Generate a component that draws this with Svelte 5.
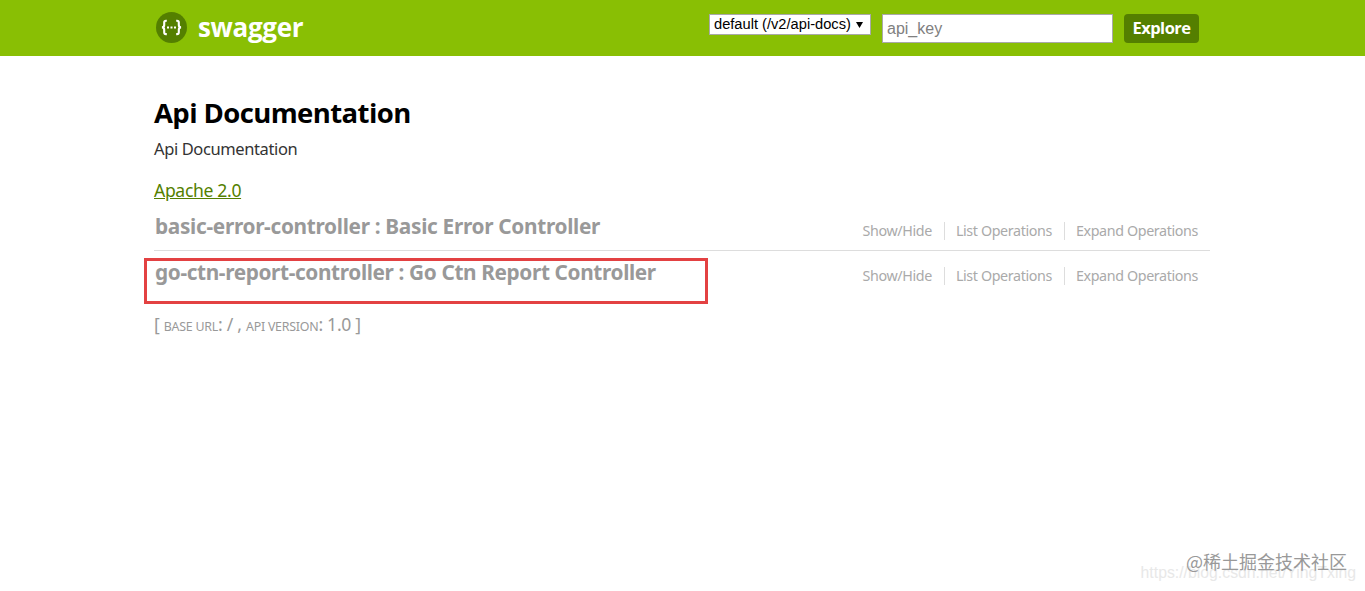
<script>
  const controllers = [
    { name: 'basic-error-controller', title: 'Basic Error Controller' },
    { name: 'go-ctn-report-controller', title: 'Go Ctn Report Controller', marked: true }
  ];
</script>

<header>
  <div class="wrap bar">
    <a class="brand" href="#/">
      <svg width="31" height="31" viewBox="0 0 31 31" fill="none" stroke="#fff">
        <circle cx="15.5" cy="15.5" r="15.5" fill="#547f00" stroke="none" />
        <path stroke-width="2.1" d="M10.8 8.7H10Q8.2 8.7 8.2 10.5V13Q8.2 15.4 5.9 15.4Q8.2 15.4 8.2 17.8V20.2Q8.2 22.1 10 22.1H10.8M20.2 8.7H21Q22.8 8.7 22.8 10.5V13Q22.8 15.4 25.1 15.4Q22.8 15.4 22.8 17.8V20.2Q22.8 22.1 21 22.1H20.2" />
        <path stroke-width="2" stroke-dasharray="2 1.5" d="M11 15.4H20" />
      </svg>
      <span>swagger</span>
    </a>
    <form>
      <div class="select"><span>default (/v2/api-docs)</span><svg width="7" height="6" viewBox="0 0 7 6"><path d="M0 0H7L3.5 6Z" /></svg></div>
      <input placeholder="api_key" aria-label="api_key" />
      <button type="button">Explore</button>
    </form>
  </div>
</header>

<main class="wrap">
  <h1>Api Documentation</h1>
  <p class="desc">Api Documentation</p>
  <p class="license"><a href="#/">Apache 2.0</a></p>
  <ul class="resources">
    {#each controllers as c}
      <li>
        <h2>{c.name} : {c.title}</h2>
        <div class="options">
          <a class="o1" href="#/">Show/Hide</a>
          <a class="o2" href="#/">List Operations</a>
          <a class="o3" href="#/">Expand Operations</a>
        </div>
        {#if c.marked}<div class="mark"></div>{/if}
      </li>
    {/each}
  </ul>
  <p class="footer">[ <small>base url</small>: / , <small>api version</small>: 1.0 ]</p>
</main>
<div class="wm-url">https://blog.csdn.net/YingTxing</div>
<div class="wm">@稀土掘金技术社区</div>

<style>
  :global(body) { background: #fff; overflow: hidden; }
  * { box-sizing: border-box; }
  .wrap { width: 1056px; margin-left: 154px; font-family: "Noto Sans", "Open Sans", sans-serif; }
  h1, h2, p, ul { margin: 0; padding: 0; }
  header { height: 56px; background: #89bf04; }
  .bar { display: flex; justify-content: space-between; }
  .brand { display: flex; padding: 12px 0 0 2px; text-decoration: none; color: #fff; }
  .brand span { font: bold 26px/30px "Open Sans", sans-serif; letter-spacing: -0.3px; margin-left: 11px; white-space: nowrap; }
  form { display: flex; padding-top: 14px; padding-right: 11px; }
  .select { display: flex; flex: none; align-items: center; width: 162px; height: 21px; border: 1px solid #a9a9a9; background: #fff; padding-left: 4px; font: 14.67px/19px "Liberation Sans", sans-serif; color: #000; white-space: nowrap; }
  .select svg { margin-left: 5px; }
  input { width: 231px; height: 29px; margin: 0 11px; border: 1px solid #a9a9a9; padding: 0 4px; font: 16px "Liberation Sans", sans-serif; border-radius: 0; outline: none; }
  input::placeholder { color: #808080; }
  button { width: 75px; height: 29px; padding: 0 0 1px; border: 0; border-radius: 4px; background: #547f00; color: #fff; font: bold 16.5px/28px "Open Sans", sans-serif; letter-spacing: -0.5px; }
  main { padding-top: 38px; }
  h1 { font-family: "Open Sans", sans-serif; font-size: 27.5px; line-height: 37px; letter-spacing: -0.6px; color: #000; }
  .desc { margin-top: 6px; font-size: 16.5px; line-height: 24px; letter-spacing: -0.39px; color: #333; }
  .license { margin-top: 17px; font-size: 17.6px; line-height: 24px; letter-spacing: -0.35px; }
  .license a { color: #547f00; }
  .resources { list-style: none; padding-top: 9px; }
  li { position: relative; display: flex; justify-content: space-between; height: 40px; border-bottom: 1px solid #ddd; }
  li:last-child { border: 0; height: 61px; padding-top: 5px; }
  h2 { font-size: 20.8px; line-height: 28px; letter-spacing: -0.31px; color: #999; padding: 1px 0 0 1px; white-space: nowrap; }
  li:last-child h2 { padding-top: 2px; letter-spacing: -0.37px; }
  .options { display: flex; padding: 11px 12px 0 0; height: 29px; font-size: 14.3px; line-height: 18px; letter-spacing: -0.38px; white-space: nowrap; }
  .options a { color: #aaa; text-decoration: none; padding-left: 11px; }
  .options a + a { border-left: 1px solid #ddd; }
  .o1, .o2 { padding-right: 12px; }
  .mark { position: absolute; left: -10px; top: 7px; width: 564px; height: 46px; border: 3px solid #e34142; }
  .footer { font-size: 17.6px; line-height: 24px; letter-spacing: -0.3px; color: #999; }
  .footer small { font-size: 12.4px; letter-spacing: -0.23px; text-transform: uppercase; }
  .wm { position: absolute; right: 18px; top: 548px; font: 18px/26px "Noto Sans CJK SC", sans-serif; color: #999; }
  .wm-url { position: absolute; right: 9px; top: 563px; font: 15.8px/20px "Liberation Sans", sans-serif; color: #e8e8e8; }
</style>
